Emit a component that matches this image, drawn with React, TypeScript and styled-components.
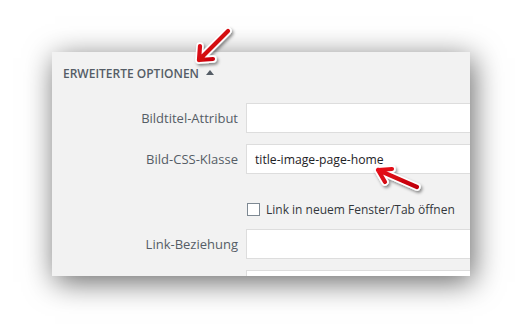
import React from "react";
import styled, { createGlobalStyle } from "styled-components";

const GlobalStyle = createGlobalStyle`
  html, body {
    margin: 0;
    padding: 0;
    background: #ffffff;
  }
  body {
    font-family: "Open Sans", "Noto Sans", sans-serif;
  }
`;

const Page = styled.div`
  position: relative;
  width: 522px;
  height: 328px;
  padding: 52px 0 0 52px;
  box-sizing: border-box;
  overflow: hidden;
`;

const Panel = styled.div`
  width: 418px;
  height: 224px;
  background: #f2f2f2;
  overflow: hidden;
  box-shadow: 3px 6px 28px rgba(0, 0, 0, 0.6);
`;

const Header = styled.div`
  display: flex;
  align-items: center;
  gap: 7px;
  padding: 12px 11px 0;
  height: 18px;
  margin-bottom: 21px;
  font-size: 12px;
  font-weight: 600;
  text-transform: uppercase;
  color: #555d66;
  white-space: nowrap;
`;

const Caret = styled.span`
  width: 0;
  height: 0;
  border-left: 4px solid transparent;
  border-right: 4px solid transparent;
  border-bottom: 5px solid #555d66;
  margin-top: -2px;
`;

const Row = styled.div<{ $top?: number }>`
  display: grid;
  grid-template-columns: 186px 300px;
  column-gap: 8px;
  align-items: center;
  margin-top: ${(p) => p.$top ?? 11}px;
`;

const Label = styled.label`
  text-align: right;
  font-size: 13px;
  color: #555d66;
  white-space: nowrap;
`;

const Input = styled.div`
  height: 30px;
  box-sizing: border-box;
  border: 1px solid #dddddd;
  background: #ffffff;
  padding: 0 8px;
  display: flex;
  align-items: center;
  font-size: 12.2px;
  color: #1e2226;
  white-space: nowrap;
`;

const CheckLine = styled.div`
  display: flex;
  align-items: center;
  gap: 6px;
  height: 18px;
  margin-left: 1px;
  font-size: 12px;
  color: #32373c;
  white-space: nowrap;
`;

const Box = styled.span`
  width: 13px;
  height: 13px;
  box-sizing: border-box;
  border: 1px solid #7e8993;
  background: #ffffff;
`;

const Overlay = styled.svg`
  position: absolute;
  left: 0;
  top: 0;
  pointer-events: none;
`;

function Arrow({ d }: { d: string }) {
  return (
    <g filter="url(#arrowShadow)">
      <path d={d} fill="none" stroke="#ffffff" strokeWidth={7.5} strokeLinecap="round" strokeLinejoin="round" />
      <path d={d} fill="none" stroke="url(#arrowRed)" strokeWidth={4.2} strokeLinecap="round" strokeLinejoin="round" />
    </g>
  );
}

export default function App() {
  return (
    <>
      <GlobalStyle />
      <Page>
        <Panel>
          <Header>
            Erweiterte Optionen <Caret />
          </Header>
          <Row $top={0}>
            <Label>Bildtitel-Attribut</Label>
            <Input />
          </Row>
          <Row>
            <Label>Bild-CSS-Klasse</Label>
            <Input>title-image-page-home</Input>
          </Row>
          <Row $top={26}>
            <span />
            <CheckLine>
              <Box />
              Link in neuem Fenster/Tab öffnen
            </CheckLine>
          </Row>
          <Row $top={11}>
            <Label>Link-Beziehung</Label>
            <Input />
          </Row>
          <Row>
            <span />
            <Input />
          </Row>
        </Panel>
        <Overlay width={522} height={328} viewBox="0 0 522 328">
          <defs>
            <linearGradient id="arrowRed" x1="0" y1="0" x2="1" y2="1">
              <stop offset="0" stopColor="#e8101a" />
              <stop offset="1" stopColor="#c00008" />
            </linearGradient>
            <filter id="arrowShadow" x="-50%" y="-50%" width="200%" height="200%">
              <feDropShadow dx="1.5" dy="2" stdDeviation="1.8" floodColor="#000" floodOpacity="0.45" />
            </filter>
          </defs>
          <Arrow d="M228 31 L199 60 M199 60 L200 46 M199 60 L213 59" />
          <Arrow d="M417 187 L378 170 M378 170 L392 169 M378 170 L385 182" />
        </Overlay>
      </Page>
    </>
  );
}
